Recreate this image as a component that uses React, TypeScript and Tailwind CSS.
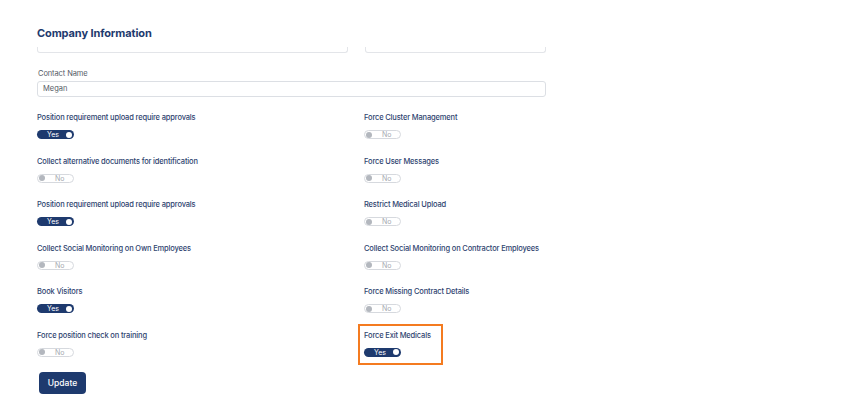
import React from "react";

type Setting = { label: string; on: boolean; highlight?: boolean };

const settings: Setting[] = [
  { label: "Position requirement upload require approvals", on: true },
  { label: "Force Cluster Management", on: false },
  { label: "Collect alternative documents for identification", on: false },
  { label: "Force User Messages", on: false },
  { label: "Position requirement upload require approvals", on: true },
  { label: "Restrict Medical Upload", on: false },
  { label: "Collect Social Monitoring on Own Employees", on: false },
  { label: "Collect Social Monitoring on Contractor Employees", on: false },
  { label: "Book Visitors", on: true },
  { label: "Force Missing Contract Details", on: false },
  { label: "Force position check on training", on: false },
  { label: "Force Exit Medicals", on: true, highlight: true },
];

function Toggle({ on }: { on: boolean }) {
  if (on) {
    return (
      <div className="relative flex h-[9px] w-[37px] items-center rounded-full bg-[#1e3a6e]">
        <span className="ml-[10px] text-[7px] leading-none text-white">Yes</span>
        <span className="absolute right-[2px] top-[1.5px] h-[6px] w-[6px] rounded-full bg-white" />
      </div>
    );
  }
  return (
    <div className="relative flex h-[9px] w-[37px] items-center rounded-full border border-[#d6d9de] bg-white">
      <span className="absolute left-[1px] top-[0.5px] h-[6px] w-[6px] rounded-full bg-[#b3b7be]" />
      <span className="ml-[17px] text-[7px] leading-none text-[#a6aab1]">No</span>
    </div>
  );
}

export default function App() {
  return (
    <div
      className="h-[397px] w-[859px] overflow-hidden bg-white"
      style={{ fontFamily: "Inter, 'Liberation Sans', sans-serif" }}
    >
      <div className="w-[546px] pl-[37px] pt-[26px]">
        <h1 className="whitespace-nowrap text-[11px] font-bold leading-[14px] tracking-[-0.1px] text-[#1e3a6e]">
          Company Information
        </h1>

        <div className="mt-[7px] grid grid-cols-[311px_181px] gap-x-[17px]">
          <div className="h-[6px] rounded-b-[3px] border-x border-b border-[#e3e5e9]" />
          <div className="h-[6px] rounded-b-[3px] border-x border-b border-[#e3e5e9]" />
        </div>

        <div className="ml-[1px] mt-[16px] text-[7.5px] leading-[10px] tracking-[-0.1px] text-[#555b66]">
          Contact Name
        </div>
        <div className="mt-[2px] flex h-[16px] items-center rounded-[3px] border border-[#dcdfe4] pl-[5px] text-[7.5px] text-[#555b66]">
          Megan
        </div>

        <div className="mt-[16px] grid grid-cols-[327px_182px] gap-y-[17.5px]">
          {settings.map((s, i) => (
            <div key={i} className="relative">
              {s.highlight && (
                <div className="absolute -left-[6px] -top-[7px] h-[41px] w-[85px] border-2 border-[#f47b20]" />
              )}
              <div className="whitespace-nowrap text-[7.5px] font-medium leading-[10px] tracking-[-0.15px] text-[#2f4470]">
                {s.label}
              </div>
              <div className="mt-[7px]">
                <Toggle on={s.on} />
              </div>
            </div>
          ))}
        </div>

        <button className="ml-[2px] mt-[15.5px] flex h-[22px] w-[47px] items-center justify-center rounded-[4px] bg-[#1e3a6e] text-[8.5px] font-medium text-white">
          Update
        </button>
      </div>
    </div>
  );
}
